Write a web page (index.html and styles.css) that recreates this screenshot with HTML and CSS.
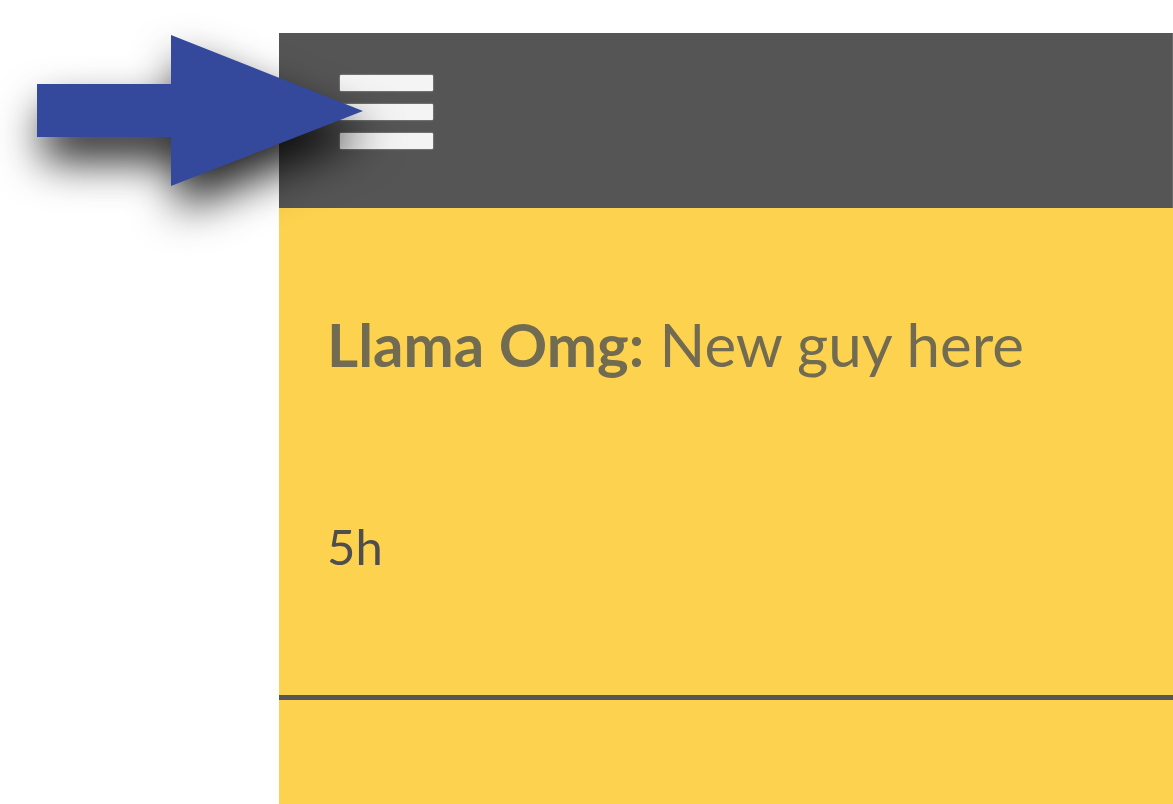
FILE: index.html
```html
<!DOCTYPE html>
<html>
<head>
<meta charset="utf-8">
<link rel="stylesheet" href="styles.css">
</head>
<body>
<div class="app">
  <header class="topbar">
    <button class="menu" aria-label="Menu">
      <span class="bar"></span>
      <span class="bar"></span>
      <span class="bar"></span>
    </button>
  </header>
  <div class="post">
    <p class="msg"><b>Llama Omg:</b> New guy here</p>
    <p class="time">5h</p>
  </div>
  <div class="post next"></div>
</div>
<svg class="arrow" width="340" height="160" viewBox="0 0 340 160" aria-hidden="true">
  <polygon points="3,51 137,51 137,2 329,78 137,153 137,104 3,104" fill="#34499c"/>
</svg>
</body>
</html>
```
FILE: styles.css
```css
html, body {
  margin: 0;
  padding: 0;
  background: #ffffff;
  height: 100%;
  overflow: hidden;
}
body {
  font-family: Lato, "Noto Sans", sans-serif;
  position: relative;
}
.app {
  margin: 33px 0 0 279px;
  background: #fdd24f;
  min-height: 771px;
}
.topbar {
  height: 175px;
  background: #555555;
  display: flex;
  align-items: flex-start;
  box-shadow: inset -1px 0 0 #6a6a6a;
}
.menu {
  margin: 42px 0 0 61px;
  padding: 0;
  border: 0;
  background: none;
  display: flex;
  flex-direction: column;
  gap: 13px;
  width: 93px;
}
.bar {
  display: block;
  height: 16px;
  background: #f4f4f4;
  border-radius: 1px;
  box-shadow: 0 0 2px rgba(255,255,255,0.6);
}
.post {
  height: 487px;
  padding-left: 48px;
  border-bottom: 5px solid #555555;
  overflow: hidden;
}
.msg {
  margin: 106px 0 0;
  font-size: 60px;
  line-height: 1;
  color: #716b52;
  white-space: nowrap;
}
.msg b {
  font-weight: 700;
}
.time {
  margin: 148px 0 0;
  font-size: 49px;
  line-height: 1;
  color: #4e4e4e;
}
.post.next {
  height: 104px;
  border-bottom: 0;
}
.arrow {
  position: absolute;
  left: 34px;
  top: 33px;
  filter: drop-shadow(6px 24px 22px rgba(0,0,0,0.85));
}
```
